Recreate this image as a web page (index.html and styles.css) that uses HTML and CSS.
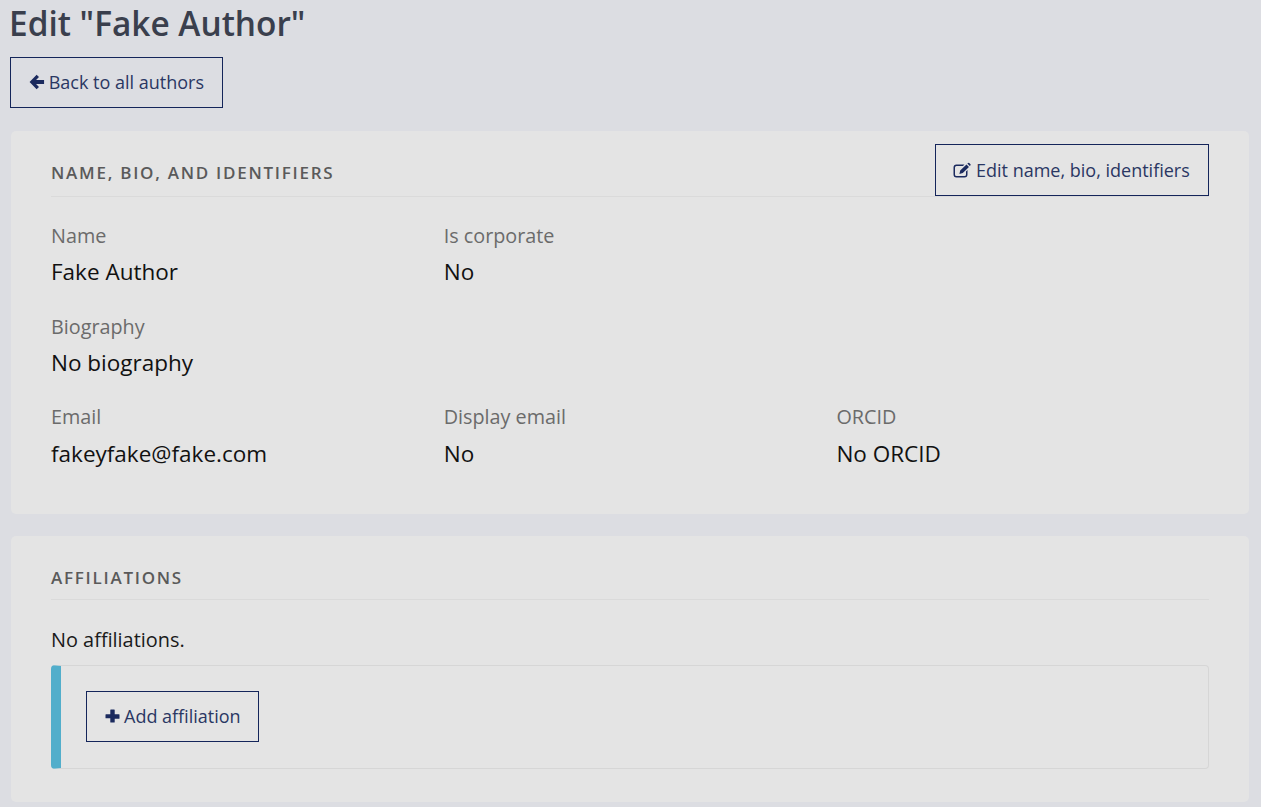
FILE: index.html
```html
<!DOCTYPE html>
<html lang="en">
<head>
    <meta charset="UTF-8">
    <title>Edit author</title>
    <link rel="stylesheet" href="styles.css">
</head>
<body>
    <h1 class="title">Edit "Fake Author"</h1>
    <a class="btn btn-back" href="#">
        <svg class="icon" viewBox="0 0 16 16"><path d="M7.800.6.6 8l7.200 7.400 2.400-2.400-3-3H15.400V6H7.200l3-3z"/></svg>
        Back to all authors
    </a>

    <section class="card card-main">
        <div class="card-head">
            <h2 class="card-title">Name, bio, and identifiers</h2>
            <a class="btn btn-edit" href="#">
                <svg class="icon icon-edit" viewBox="0.5 0 17.300 16"><path d="M3.500 2.500h8L10 4H3.500A1.500 1.500 0 0 0 2 5.500v7A1.500 1.500 0 0 0 3.500 14h8a1.500 1.500 0 0 0 1.500-1.500V9.500l1.500-1.500v4.500a3 3 0 0 1-3 3h-8a3 3 0 0 1-3-3v-7a3 3 0 0 1 3-3z"/><path d="M13.500 2.400 16 4.900 9.800 11.100 6.400 11.900 7.200 8.600zM14.300 1.600 15.200.9a.8.8 0 0 1 1 0l1.300 1.300a.8.8 0 0 1 0 1L16.800 4.100z"/></svg>
                Edit name, bio, identifiers
            </a>
        </div>
        <div class="fields">
            <div class="field"><div class="label">Name</div><div class="value">Fake Author</div></div>
            <div class="field"><div class="label">Is corporate</div><div class="value">No</div></div>
            <div class="field"></div>
            <div class="field wide"><div class="label">Biography</div><div class="value">No biography</div></div>
            <div class="field"><div class="label">Email</div><div class="value">fakeyfake@fake.com</div></div>
            <div class="field"><div class="label">Display email</div><div class="value">No</div></div>
            <div class="field"><div class="label">ORCID</div><div class="value">No ORCID</div></div>
        </div>
    </section>

    <section class="card card-aff">
        <div class="card-head plain">
            <h2 class="card-title">Affiliations</h2>
        </div>
        <p class="empty">No affiliations.</p>
        <div class="callout">
            <a class="btn btn-add" href="#">
                <svg class="icon icon-plus" viewBox="0 0 15 16"><path d="M5.800 1.500h3.400a.5.5 0 0 1 .5.500v4.300H14a.5.5 0 0 1 .5.500v3.400a.5.5 0 0 1-.5.500H9.700V14a.5.5 0 0 1-.5.500H5.800a.5.5 0 0 1-.5-.5V10.200H1a.5.500 0 0 1-.5-.5V6.800a.5.5 0 0 1 .5-.5h4.300V2a.5.5 0 0 1 .5-.5z"/></svg>
                Add affiliation
            </a>
        </div>
    </section>
</body>
</html>
```

FILE: styles.css
```css
*{
    box-sizing: border-box;
}
body{
    margin: 0;
    height: 807px;
    overflow: hidden;
    padding: 0 12px 0 10px;
    background-color: #dcdde2;
    font-family: "Open Sans", "Liberation Sans", sans-serif;
    color: #111;
}
.title{
    margin: 0 0 0 -1px;
    height: 57px;
    font-size: 33.400px;
    line-height: 46px;
    font-weight: 600;
    color: #3a3f4d;
}
.btn{
    display: inline-flex;
    align-items: center;
    gap: 4px;
    height: 51px;
    padding: 0 18px 1px;
    border: 1px solid #14255a;
    color: #2a3763;
    font-size: 18px;
    text-decoration: none;
    white-space: nowrap;
}
.icon{
    width: 16px;
    height: 16px;
    fill: #1b2a5e;
}
.icon-edit{
    width: 18.300px;
}
.icon-plus{
    width: 15px;
}
.btn-back{
    width: 213px;
    vertical-align: top;
}
.btn-edit{
    width: 274px;
    height: 52px;
    padding-left: 17px;
    padding-right: 0;
    gap: 4.700px;
}
.btn-add{
    width: 173px;
    padding-right: 0;
}
.card{
    margin-left: 1px;
    padding: 0 40px;
    background-color: #e4e4e4;
    border-radius: 5px;
}
.card-main{
    height: 383px;
    margin-top: 23px;
    padding-top: 13px;
}
.card-aff{
    height: 266px;
    margin-top: 22px;
    padding-top: 30px;
}
.card-head{
    display: flex;
    justify-content: space-between;
    align-items: flex-end;
    border-bottom: 1px solid #dadada;
}
.card-head.plain{
    height: 34px;
    align-items: flex-start;
}
.card-title{
    margin: 0 0 11px;
    font-size: 17px;
    line-height: 24px;
    font-weight: 600;
    letter-spacing: 1.740px;
    text-transform: uppercase;
    color: #5a5a5a;
}
.plain .card-title{
    margin-bottom: 0;
}
.fields{
    display: grid;
    grid-template-columns: repeat(3, 392.700px);
    margin-top: 24px;
    row-gap: 23.400px;
}
.wide{
    grid-column: span 3;
}
.label{
    font-size: 19.800px;
    line-height: 30px;
    color: #6b6b6b;
}
.value{
    margin-top: 4.300px;
    font-size: 22.500px;
    line-height: 33px;
    color: #111;
}
.empty{
    margin: 27px 0 0;
    font-size: 19.900px;
    line-height: 26px;
    color: #1a1a1a;
}
.callout{
    display: flex;
    align-items: center;
    height: 104px;
    margin-top: 12px;
    padding: 0 0 1px 25px;
    border: 1px solid #d6d6d6;
    border-left: 10px solid #52aecb;
    border-radius: 4px;
}
```
